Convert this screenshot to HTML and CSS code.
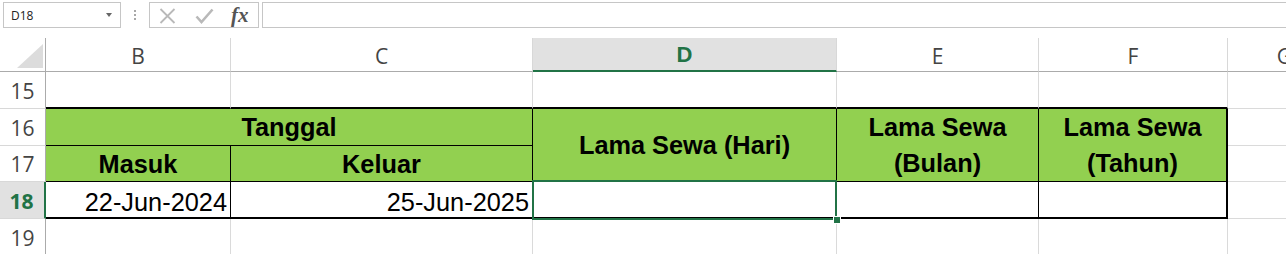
FILE: index.html
```html
<!DOCTYPE html>
<html>
<head>
<meta charset="utf-8">
<link rel="stylesheet" href="styles.css">
</head>
<body>
<div class="topbar">
  <div class="namebox"><span>D18</span><span class="caret"></span></div>
  <div class="dots"><span></span><span></span><span></span></div>
  <div class="fxbox">
    <svg class="ico-x" width="17" height="16" viewBox="0 0 17 16"><path d="M1.5 1 L15.5 15 M15.5 1 L1.5 15" stroke="#b9b9b9" stroke-width="1.8" fill="none"/></svg>
    <svg class="ico-ok" width="19" height="16" viewBox="0 0 19 16"><path d="M1.5 8.5 L6.5 14 L17.5 1.5" stroke="#b9b9b9" stroke-width="2.6" fill="none"/></svg>
    <span class="fx">fx</span>
  </div>
  <div class="formula"></div>
</div>
<div class="sheet">
  <div class="corner"><svg width="26" height="24" viewBox="0 0 26 24"><polygon points="26,0 26,24 0,24" fill="#dcdcdc"/></svg></div>
  <div class="ch">B</div>
  <div class="ch">C</div>
  <div class="ch sel">D</div>
  <div class="ch">E</div>
  <div class="ch">F</div>
  <div class="ch">G</div>

  <div class="rh">15</div>
  <div class="c tb"></div>
  <div class="c tb"></div>
  <div class="c tb"></div>
  <div class="c tb"></div>
  <div class="c tb"></div>
  <div class="c"></div>

  <div class="rh">16</div>
  <div class="c hd span-c">Tanggal</div>
  <div class="c hd span-r">Lama Sewa (Hari)</div>
  <div class="c hd span-r">Lama Sewa<br>(Bulan)</div>
  <div class="c hd span-r rb">Lama Sewa<br>(Tahun)</div>
  <div class="c"></div>

  <div class="rh">17</div>
  <div class="c hd">Masuk</div>
  <div class="c hd">Keluar</div>
  <div class="c"></div>

  <div class="rh sel">18</div>
  <div class="c dt">22-Jun-2024</div>
  <div class="c dt">25-Jun-2025</div>
  <div class="c dt active"><span class="selbox"></span></div>
  <div class="c dt"></div>
  <div class="c dt rb"></div>
  <div class="c"></div>

  <div class="rh">19</div>
  <div class="c"></div>
  <div class="c"></div>
  <div class="c"></div>
  <div class="c"></div>
  <div class="c"></div>
  <div class="c"></div>
</div>
</body>
</html>
```
FILE: styles.css
```css
html, body {
  margin: 0;
  padding: 0;
  background: #fff;
}
body {
  width: 1286px;
  height: 254px;
  overflow: hidden;
  font-family: "Open Sans", "Noto Sans", sans-serif;
}
.topbar {
  display: flex;
  align-items: flex-start;
  height: 38px;
  padding-top: 2px;
  box-sizing: border-box;
}
.namebox {
  margin-left: 3px;
  width: 118px;
  height: 26px;
  border: 1px solid #c6c6c6;
  box-sizing: border-box;
  display: flex;
  align-items: center;
  justify-content: space-between;
  padding: 0 8px 0 7px;
  font-size: 12px;
  color: #222;
}
.caret {
  width: 0;
  height: 0;
  border-left: 3.5px solid transparent;
  border-right: 3.5px solid transparent;
  border-top: 4px solid #666;
}
.dots {
  margin: 8px 0 0 13px;
  display: flex;
  flex-direction: column;
  gap: 2px;
}
.dots span {
  width: 2px;
  height: 2px;
  background: #a8a8a8;
}
.fxbox {
  margin-left: 13px;
  width: 110px;
  height: 26px;
  border: 1px solid #c6c6c6;
  box-sizing: border-box;
  display: flex;
  align-items: center;
  padding-left: 9px;
}
.ico-x {
  margin-top: 1px;
}
.ico-ok {
  margin-left: 19px;
  margin-top: 1px;
}
.fx {
  margin-left: 17px;
  font-family: "Liberation Serif", serif;
  font-style: italic;
  font-weight: bold;
  font-size: 21px;
  color: #555;
  line-height: 24px;
}
.formula {
  margin-left: 3px;
  flex: 1;
  height: 26px;
  border: 1px solid #c6c6c6;
  box-sizing: border-box;
  margin-right: -3px;
}
.sheet {
  display: grid;
  grid-template-columns: 46px 185px 302px 304px 202px 189px 114px;
  grid-template-rows: 34px 37px 37px 36px 37px 37px;
}
.sheet > div {
  box-sizing: border-box;
}
.corner {
  border-right: 1px solid #ababab;
  border-bottom: 1px solid #ababab;
  display: flex;
  align-items: flex-end;
  justify-content: flex-end;
  padding: 0 2px 3px 0;
}
.ch {
  border-right: 1px solid #d8d8d8;
  border-bottom: 1px solid #ababab;
  display: flex;
  align-items: center;
  justify-content: center;
  padding-top: 2px;
  font-size: 21px;
  color: #444;
}
.ch.sel {
  background: #e1e1e1;
  border-bottom: 2px solid #217346;
  color: #217346;
  font-weight: 700;
  font-family: "Liberation Sans", Arial, sans-serif;
  font-size: 22px;
}
.rh {
  border-right: 1px solid #ababab;
  border-bottom: 1px solid #d8d8d8;
  display: flex;
  align-items: center;
  justify-content: center;
  padding-top: 1px;
  font-size: 21px;
  color: #444;
}
.rh.sel {
  background: #e1e1e1;
  border-right: 2px solid #217346;
  color: #217346;
  font-weight: 700;
  padding-right: 1px;
}
.c {
  border-right: 1px solid #dadada;
  border-bottom: 1px solid #dadada;
}
.c.tb {
  border-bottom: 2px solid #000;
}
.c.hd {
  background: #92d050;
  border-right: 1px solid #000;
  border-bottom: 1px solid #000;
  display: flex;
  align-items: center;
  justify-content: center;
  text-align: center;
  font-family: "Liberation Sans", Arial, sans-serif;
  font-weight: bold;
  font-size: 25.33px;
  line-height: 36px;
  color: #000;
}
.span-c {
  grid-column: span 2;
}
.span-r {
  grid-row: span 2;
}
.c.rb {
  border-right: 2px solid #000;
}
.c.dt {
  border-right: 1px solid #000;
  border-bottom: 2px solid #000;
  display: flex;
  align-items: flex-end;
  justify-content: flex-end;
  padding: 0 3px 1px 0;
  font-family: "Liberation Sans Narrow", "Arial Narrow", "Liberation Sans", sans-serif;
  font-size: 25.33px;
  line-height: 28px;
  color: #000;
}
.c.dt.rb {
  border-right: 2px solid #000;
}
.active {
  position: relative;
}
.selbox {
  position: absolute;
  left: -1px;
  top: -2px;
  width: 305px;
  height: 40px;
  border: 2px solid #217346;
  box-sizing: border-box;
}
.selbox::after {
  content: "";
  position: absolute;
  left: 300px;
  top: 35px;
  width: 6px;
  height: 6px;
  background: #217346;
  outline: 1px solid #fff;
}
```
